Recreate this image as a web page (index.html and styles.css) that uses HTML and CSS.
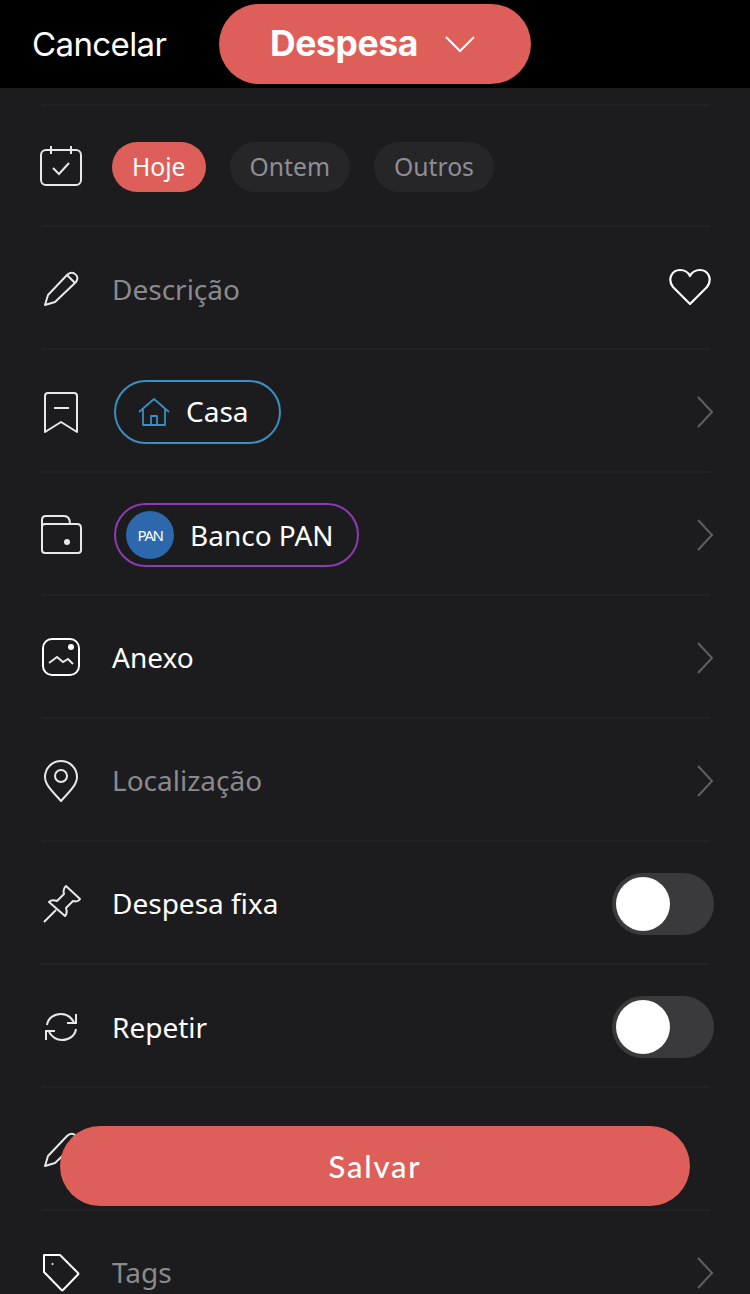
FILE: index.html
```html
<!DOCTYPE html>
<html lang="pt">
<head>
<meta charset="utf-8">
<title>Despesa</title>
<link rel="stylesheet" href="styles.css">
</head>
<body>
<div class="screen">
  <header class="topbar">
    <span class="cancel">Cancelar</span>
    <div class="type-pill">
      <span class="type-label">Despesa</span>
      <svg class="type-chevron" width="32" height="20" viewBox="0 0 32 20"><path d="M2 3l14 14L30 3" fill="none" stroke="#fff" stroke-width="2"/></svg>
    </div>
  </header>
  <main class="form">
    <div class="row row-date">
      <svg class="icon" width="44" height="44" viewBox="0 0 44 44"><rect x="1" y="5" width="40" height="35" rx="5" fill="none" stroke="#e8e8e8" stroke-width="2"/><path d="M11 1v8M31 1v8" stroke="#e8e8e8" stroke-width="2"/><path d="M13 23l6 6 10-11" fill="none" stroke="#e8e8e8" stroke-width="2"/></svg>
      <div class="chips">
        <span class="chip chip-on">Hoje</span>
        <span class="chip">Ontem</span>
        <span class="chip">Outros</span>
      </div>
    </div>
    <div class="row">
      <svg class="icon" width="44" height="44" viewBox="0 0 44 44"><path d="M5 38l3-10L27 8c2-2 5-3 8-1s3 5 1 8L15 35z M27 8l8 8" fill="none" stroke="#e8e8e8" stroke-width="2" stroke-linejoin="round"/></svg>
      <span class="label muted">Descrição</span>
      <svg class="heart" width="44" height="38" viewBox="0 0 44 38"><path d="M22 36L5 19C-1 11 4 2 12 2c5 0 8 2 10 6 2-4 5-6 10-6 8 0 13 9 7 17z" fill="none" stroke="#fff" stroke-width="2.2" stroke-linejoin="round"/></svg>
    </div>
    <div class="row">
      <svg class="icon" width="44" height="44" viewBox="0 0 44 44"><path d="M5 42V6c0-2 1-3 3-3h26c2 0 3 1 3 3v36L21 32z" fill="none" stroke="#e8e8e8" stroke-width="2" stroke-linejoin="round"/><path d="M14 18h15" stroke="#e8e8e8" stroke-width="2"/></svg>
      <div class="tag tag-blue">
        <svg class="tag-icon" width="32" height="30" viewBox="0 0 32 30"><path d="M1 15L16 2l15 13 M5 12v16h22V12 M13 28v-9h6v9" fill="none" stroke="#3a8fc2" stroke-width="1.8" stroke-linejoin="round"/></svg>
        <span class="label label-up">Casa</span>
      </div>
      <svg class="chevron" width="18" height="32" viewBox="0 0 18 32"><path d="M2 1l14 15L2 31" fill="none" stroke="#5f5f61" stroke-width="2"/></svg>
    </div>
    <div class="row">
      <svg class="icon" width="44" height="44" viewBox="0 0 44 44"><path d="M2 14V7c0-3 2-4 4-4h18c4 0 6 2 6 8 M2 14c0-2 1-3 3-3h32c3 0 4 2 4 4v22c0 2-1 3-3 3H5c-2 0-3-1-3-3z" fill="none" stroke="#e8e8e8" stroke-width="2"/><circle cx="27" cy="29" r="3" fill="#e8e8e8"/></svg>
      <div class="tag tag-purple">
        <span class="bank-logo">PAN</span>
        <span class="label">Banco PAN</span>
      </div>
      <svg class="chevron" width="18" height="32" viewBox="0 0 18 32"><path d="M2 1l14 15L2 31" fill="none" stroke="#5f5f61" stroke-width="2"/></svg>
    </div>
    <div class="row">
      <svg class="icon" width="44" height="44" viewBox="0 0 44 44"><rect x="3" y="3" width="36" height="36" rx="9" fill="none" stroke="#fff" stroke-width="2"/><circle cx="31" cy="11" r="3" fill="#fff"/><path d="M9 27l8-6 6 5 5-3 5 5" fill="none" stroke="#e8e8e8" stroke-width="2"/></svg>
      <span class="label label-up">Anexo</span>
      <svg class="chevron" width="18" height="32" viewBox="0 0 18 32"><path d="M2 1l14 15L2 31" fill="none" stroke="#5f5f61" stroke-width="2"/></svg>
    </div>
    <div class="row">
      <svg class="icon" width="44" height="44" viewBox="0 0 44 44"><path d="M21 42C13 33 5 26 5 18a16 16 0 0 1 32 0c0 8-8 15-16 24z" fill="none" stroke="#e8e8e8" stroke-width="2" stroke-linejoin="round"/><circle cx="21" cy="17" r="6" fill="none" stroke="#e8e8e8" stroke-width="2"/></svg>
      <span class="label label-up muted">Localização</span>
      <svg class="chevron" width="18" height="32" viewBox="0 0 18 32"><path d="M2 1l14 15L2 31" fill="none" stroke="#5f5f61" stroke-width="2"/></svg>
    </div>
    <div class="row">
      <svg class="icon" width="44" height="44" viewBox="0 0 44 44"><path d="M4 40l12-12 M26 4l14 13c-1 2-4 3-7 2l-7 7c1 3 1 6-1 8L9 20c2-2 5-2 8-1l7-7c-1-3 0-6 2-8z" fill="none" stroke="#e8e8e8" stroke-width="2" stroke-linejoin="round"/></svg>
      <span class="label label-up">Despesa fixa</span>
      <div class="toggle"><span class="knob"></span></div>
    </div>
    <div class="row">
      <svg class="icon" width="44" height="44" viewBox="0 0 44 44"><path d="M7 20c1-7 7-11 14-11 6 0 10 3 13 8M36 24c-1 7-7 11-14 11-6 0-10-3-13-8" fill="none" stroke="#e8e8e8" stroke-width="2"/><path d="M36 9v9h-9M6 35v-9h9" fill="none" stroke="#e8e8e8" stroke-width="2"/></svg>
      <span class="label">Repetir</span>
      <div class="toggle"><span class="knob"></span></div>
    </div>
    <div class="row">
      <svg class="icon" width="44" height="44" viewBox="0 0 44 44"><path d="M5 38l3-10L27 8c2-2 5-3 8-1s3 5 1 8L15 35z" fill="none" stroke="#e8e8e8" stroke-width="2" stroke-linejoin="round"/></svg>
    </div>
    <div class="row">
      <svg class="icon" width="44" height="44" viewBox="0 0 44 44"><path d="M4 4h16l18 18c.5.5.5 1 0 1.500L23 39c-.5.5-1 .5-1.500 0L4 21z" fill="none" stroke="#fff" stroke-width="2" stroke-linejoin="round"/><circle cx="12.500" cy="13" r="1" fill="#fff"/></svg>
      <span class="label label-up muted">Tags</span>
      <svg class="chevron" width="18" height="32" viewBox="0 0 18 32"><path d="M2 1l14 15L2 31" fill="none" stroke="#5f5f61" stroke-width="2"/></svg>
    </div>
  </main>
  <button class="save">Salvar</button>
</div>
</body>
</html>
```
FILE: styles.css
```css
* { box-sizing: border-box; }
html, body { margin: 0; padding: 0; background: #1c1c1e; }
.screen { position: relative; width: 750px; height: 1294px; overflow: hidden; background: #1c1c1e; }
.topbar { height: 88px; background: #000; display: flex; align-items: flex-start; padding: 4px 0 0 32px; }
.cancel { font: 400 33px/80px Inter, sans-serif; color: #fff; letter-spacing: -0.6px; width: 187px; }
.type-pill { width: 312px; height: 80px; border-radius: 40px; background: #de5f59; display: flex; align-items: center; padding-left: 51px; gap: 26px; }
.type-label { font: 700 35.500px/1 Inter, sans-serif; color: #fff; letter-spacing: -0.4px; }
.type-chevron { display: block; }
.form { padding: 16px 40px 0 41px; }
.row { height: 123px; padding-top: 2px; border-top: 2px solid #232325; display: flex; align-items: center; position: relative; }
.row-date { height: 121px; }
.icon { flex: none; margin-right: 28px; margin-left: -1px; }
.label { font: 400 28px/36px "Noto Sans", sans-serif; color: #fff; }
.label-up { margin-top: -2px; }
.muted { color: #8a8a8e; }
.chips { display: flex; gap: 24px; }
.chip { height: 50px; padding: 0 20px; border-radius: 25px; background: #262628; color: #8e8e93; font: 400 24.700px/50px "Noto Sans", sans-serif; }
.chip-on { background: #de5f59; color: #fff; }
.tag { display: flex; align-items: center; height: 64px; border-radius: 32px; border: 2px solid; margin-left: 2px; }
.tag-blue { border-color: #3a8fc2; padding: 0 30px 0 22px; gap: 16px; }
.tag-purple { border-color: #8e3ab5; padding: 0 23px 0 10px; gap: 16px; }
.bank-logo { width: 48px; height: 48px; border-radius: 50%; background: #2d68ac; color: #fff; font: 400 15px/48px "Noto Sans", sans-serif; letter-spacing: -1.500px; text-align: center; }
.heart { position: absolute; right: -2px; top: 41px; }
.chevron { position: absolute; right: -4px; top: 46px; }
.toggle { position: absolute; right: -4px; top: 31px; width: 102px; height: 62px; border-radius: 31px; background: #3a3a3c; }
.knob { display: block; position: absolute; left: 4px; top: 4px; width: 54px; height: 54px; border-radius: 50%; background: #fff; }
.save { position: absolute; left: 60px; top: 1126px; width: 630px; height: 80px; border: 0; border-radius: 40px; background: #de5f59; color: #fff; font: 500 31px/80px Lato, sans-serif; letter-spacing: 1.800px; padding: 0; }
```
